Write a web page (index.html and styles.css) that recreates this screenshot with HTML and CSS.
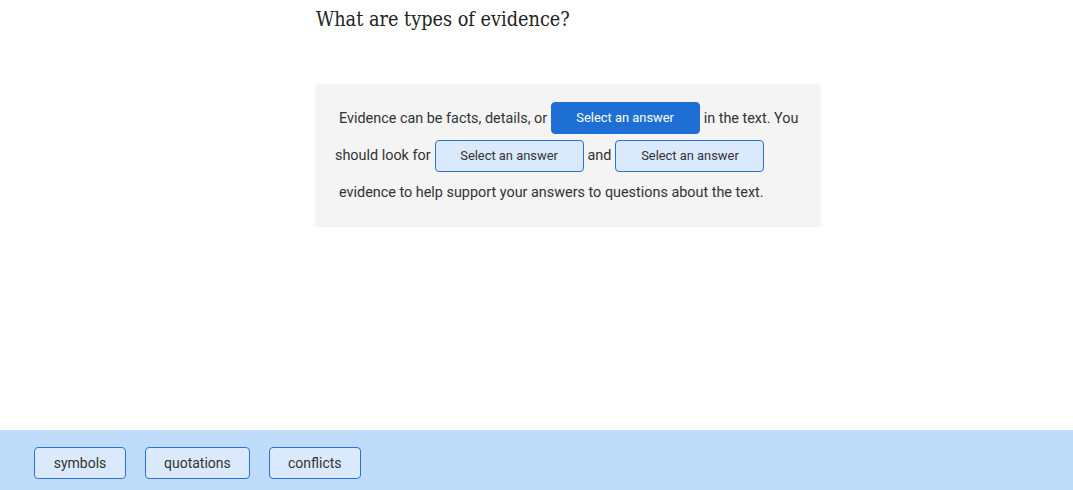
FILE: index.html
```html
<!DOCTYPE html>
<html>
<head>
<meta charset="utf-8">
<link rel="stylesheet" href="styles.css">
</head>
<body>
<div class="page">
  <main class="main">
    <h1 class="title">What are types of evidence?</h1>
    <div class="card"><span class="seg">Evidence can be facts, details, or</span><span class="blank filled">Select an answer</span><span class="seg">in the text. You should look for</span><span class="blank">Select an answer</span><span class="seg">and</span><span class="blank">Select an answer</span><span class="seg">evidence to help support your answers to questions about the text.</span></div>
  </main>
  <footer class="bank">
    <button class="chip">symbols</button>
    <button class="chip">quotations</button>
    <button class="chip">conflicts</button>
  </footer>
</div>
</body>
</html>
```
FILE: styles.css
```css
html, body {
  margin: 0;
  padding: 0;
  background: #ffffff;
}
body {
  font-family: Roboto, "Liberation Sans", sans-serif;
  color: #333333;
}
.page {
  height: 490px;
  display: flex;
  flex-direction: column;
}
.main {
  flex: 1;
  padding-left: 315px;
}
.title {
  margin: 0;
  padding: 8px 0 0 1px;
  font-family: "DejaVu Serif Condensed", "DejaVu Serif", serif;
  font-stretch: condensed;
  font-weight: normal;
  font-size: 19.7px;
  line-height: 24px;
  color: #222222;
  height: 76px;
}
.card {
  width: 466px;
  padding: 16px 20px;
  background: #f4f4f4;
  border-radius: 4px;
  font-size: 14.4px;
  line-height: 37px;
}
.seg {
  padding: 0 4px;
}
.seg:first-child {
  padding-right: 3.5px;
}
.blank {
  display: inline-block;
  box-sizing: border-box;
  width: 149px;
  height: 32px;
  line-height: 30px;
  vertical-align: middle;
  text-align: center;
  font-size: 12.9px;
  color: #333333;
  background: #dbe9fd;
  border: 1px solid #2a72d5;
  border-radius: 4px;
}
.blank.filled {
  background: #1e6fd4;
  border-color: #1e6fd4;
  color: #ffffff;
  top: -1px;
  position: relative;
}
.bank {
  height: 60px;
  background: #bfdcfa;
  display: flex;
  align-items: flex-start;
  gap: 19px;
  padding: 17px 0 0 34px;
  box-sizing: border-box;
}
.chip {
  height: 32px;
  min-width: 92px;
  padding: 0 18px;
  font-family: Roboto, "Liberation Sans", sans-serif;
  font-size: 14px;
  color: #333333;
  background: #dbe9fd;
  border: 1px solid #2a72d5;
  border-radius: 4px;
}
```
